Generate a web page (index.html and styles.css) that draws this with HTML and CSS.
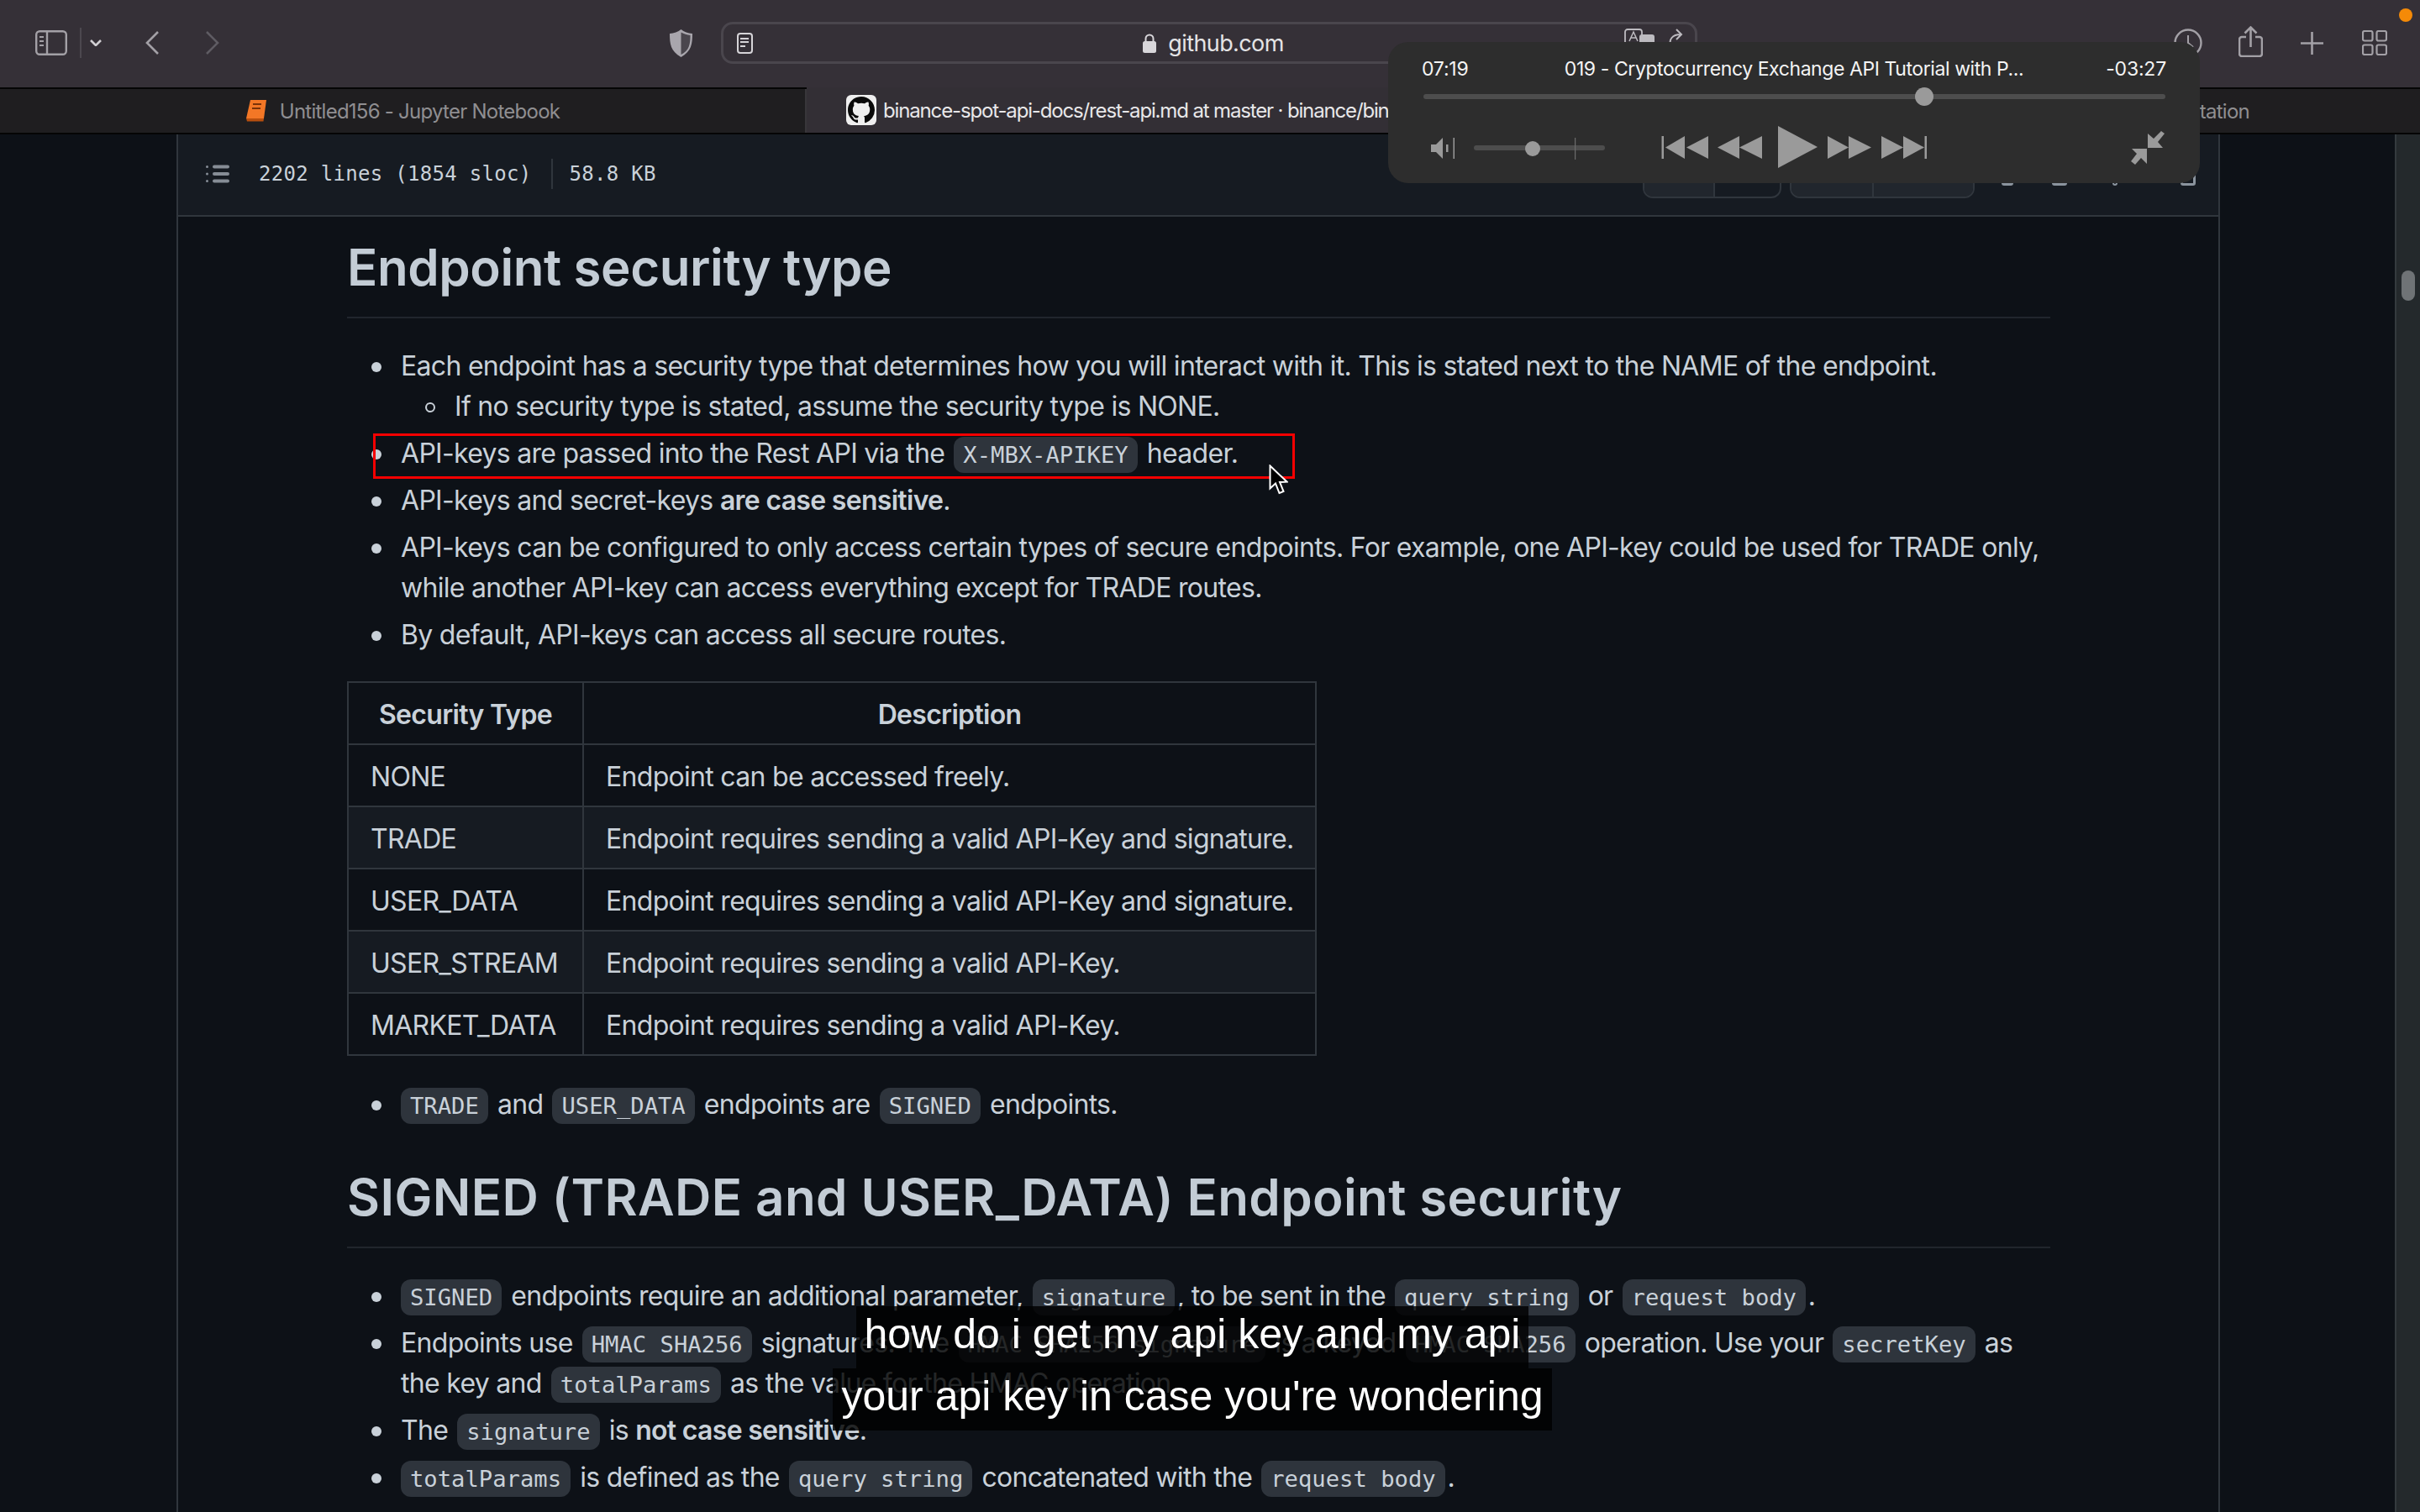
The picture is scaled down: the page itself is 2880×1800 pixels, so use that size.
FILE: index.html
```html
<!DOCTYPE html>
<html lang="en">
<head>
<meta charset="utf-8">
<title>binance-spot-api-docs/rest-api.md</title>
<link rel="stylesheet" href="styles.css">
</head>
<body>
<div class="screen">
  <header class="toolbar">
    <svg class="ic-sidebar" width="38" height="30" viewBox="0 0 38 30" fill="none" stroke="#a3a0a6" stroke-width="2.4"><rect x="1.2" y="1.2" width="35.6" height="27.6" rx="4"/><path d="M14 1.2v27.6"/><path d="M5 8h5M5 13h5M5 18h5" stroke-width="2"/></svg>
    <span class="tb-divider"></span>
    <svg class="ic-chev" width="14" height="8" viewBox="0 0 14 8" fill="none" stroke="#d0ced2" stroke-width="2.6"><path d="M1 1l6 6 6-6"/></svg>
    <svg class="ic-back" width="16" height="28" viewBox="0 0 16 28" fill="none" stroke="#a3a0a6" stroke-width="2.6"><path d="M15 1L2 14l13 13"/></svg>
    <svg class="ic-fwd" width="16" height="28" viewBox="0 0 16 28" fill="none" stroke="#5f5c63" stroke-width="2.6"><path d="M1 1l13 13L1 27"/></svg>
    <svg class="ic-shield" width="27" height="33" viewBox="0 0 27 33"><path d="M13.5 0C10 3 5 4.500 0 5c0 12 1 21 13.500 28C26 26 27 17 27 5 22 4.500 17 3 13.500 0z" fill="#a9a6ad"/><path d="M13.500 3.500C17 5.500 20.500 6.500 24.500 7c0 10-1 18-11 23z" fill="#4a464d"/></svg>
    <div class="urlbar">
      <svg class="ic-reader" width="19" height="25" viewBox="0 0 19 25" fill="none" stroke="#d6d4d8" stroke-width="2"><rect x="1" y="1" width="17" height="23" rx="3"/><path d="M4 7h10M4 11h10M4 16h6"/></svg>
      <div class="url-host">
        <svg width="16" height="23" viewBox="0 0 16 23"><rect y="9" width="16" height="14" rx="2.500" fill="#d8d6da"/><path d="M3.500 10V6a4.500 4.500 0 019 0v4" fill="none" stroke="#d8d6da" stroke-width="2"/></svg>
        <span class="host-text">github.com</span>
      </div>
      <div class="url-tools">
        <svg width="36" height="22" viewBox="0 0 36 22" fill="none"><rect x="1" y="1" width="20" height="19" rx="3" stroke="#bdbbc0" stroke-width="1.800"/><path d="M6 15l5-11 5 11M8 11h6" stroke="#bdbbc0" stroke-width="1.500"/><rect x="18" y="7" width="18" height="15" rx="3" fill="#bdbbc0"/></svg>
        <svg width="21" height="22" viewBox="0 0 21 22" fill="none" stroke="#bdbbc0" stroke-width="2"><path d="M4 21c-2-8 2-14 12-14M11 1l6 6-6 6"/></svg>
      </div>
    </div>
    <svg class="ic-clock" width="34" height="34" viewBox="0 0 34 34" fill="none" stroke="#a3a0a6" stroke-width="2.400"><circle cx="17" cy="17" r="15.500"/><path d="M17 8v9l6 5" stroke-width="2"/></svg>
    <svg class="ic-share" width="29" height="37" viewBox="0 0 29 37" fill="none" stroke="#a3a0a6" stroke-width="2.600"><path d="M9 13H4a3 3 0 00-3 3v17a3 3 0 003 3h21a3 3 0 003-3V16a3 3 0 00-3-3h-5"/><path d="M14.500 25V2M7.500 8.500l7-7 7 7"/></svg>
    <svg class="ic-plus" width="27" height="27" viewBox="0 0 27 27" fill="none" stroke="#a3a0a6" stroke-width="2.600"><path d="M13.500 0v27M0 13.500h27"/></svg>
    <svg class="ic-grid" width="30" height="30" viewBox="0 0 30 30" fill="none" stroke="#a3a0a6" stroke-width="2.200"><rect x="1" y="1" width="11.500" height="11.500" rx="2"/><rect x="17.500" y="1" width="11.500" height="11.500" rx="2"/><rect x="1" y="17.500" width="11.500" height="11.500" rx="2"/><rect x="17.500" y="17.500" width="11.500" height="11.500" rx="2"/></svg>
  </header>

  <nav class="tabs">
    <div class="tab tab-first">
      <svg width="26" height="26" viewBox="0 0 26 26"><path d="M6 0h19l-3 22H1z" fill="#f37726"/><path d="M1 22h21l-.5 3.500H2z" fill="#b84f0e"/><path d="M9 5h10M8 10h10" stroke="#7a3208" stroke-width="2.200"/></svg>
      <span>Untitled156 - Jupyter Notebook</span>
    </div>
    <div class="tab tab-active">
      <svg width="36" height="36" viewBox="0 0 36 36"><rect width="36" height="36" rx="6" fill="#efefef"/><g transform="translate(2 2)"><path fill="#0a0a0a" d="M16 0C7.160 0 0 7.160 0 16c0 7.080 4.580 13.060 10.940 15.180.8.140 1.100-.34 1.100-.76 0-.38-.02-1.640-.02-2.980-4.020.74-5.060-.98-5.380-1.880-.18-.46-.96-1.880-1.640-2.260-.56-.3-1.360-1.040-.02-1.060 1.260-.02 2.160 1.160 2.460 1.640 1.440 2.420 3.740 1.740 4.660 1.320.14-1.040.56-1.740 1.020-2.140-3.560-.4-7.280-1.780-7.280-7.900 0-1.740.62-3.180 1.640-4.300-.16-.4-.72-2.040.16-4.240 0 0 1.340-.42 4.400 1.640 1.280-.36 2.640-.54 4-.54s2.720.18 4 .54c3.060-2.080 4.400-1.640 4.400-1.640.88 2.200.32 3.840.16 4.240 1.020 1.120 1.640 2.540 1.640 4.300 0 6.140-3.740 7.500-7.300 7.900.58.5 1.080 1.460 1.080 2.960 0 2.140-.02 3.860-.02 4.400 0 .42.3.92 1.100.76A16.030 16.030 0 0032 16C32 7.160 24.840 0 16 0z"/></g></svg>
      <span>binance-spot-api-docs/rest-api.md at master · binance/binance-spot-api-docs · GitHub</span>
    </div>
    <div class="tab tab-last"><span>Binance Spot API Documentation</span></div>
  </nav>

  <main class="viewport">
    <div class="page">
      <section class="box">
        <div class="box-head">
          <svg class="ic-toc" width="28" height="24" viewBox="0 0 28 24" fill="#868d96"><rect y="2" width="3" height="3" rx="1.500"/><rect y="10.500" width="3" height="3" rx="1.500"/><rect y="19" width="3" height="3" rx="1.500"/><rect x="8" y="1.500" width="20" height="4" rx="2"/><rect x="8" y="10" width="20" height="4" rx="2"/><rect x="8" y="18.500" width="20" height="4" rx="2"/></svg>
          <span class="file-meta">2202 lines (1854 sloc)</span>
          <span class="meta-size">58.8 KB</span>
          <div class="btn-group group-a"><span class="btn btn-raised btn-a1"></span><span class="btn btn-a2"></span></div>
          <div class="btn-group group-b"><span class="btn btn-raised btn-b1"></span><span class="btn btn-raised btn-b2"></span></div>
          <span class="mini mini-a"></span><span class="mini mini-b"></span><span class="mini mini-c"></span><span class="mini mini-d"></span>
        </div>
        <article class="doc">
          <h2 class="h2-first">Endpoint security type</h2>
          <ul>
            <li>Each endpoint has a security type that determines how you will interact with it. This is stated next to the NAME of the endpoint.
              <ul class="sub"><li>If no security type is stated, assume the security type is NONE.</li></ul>
            </li>
            <li>API-keys are passed into the Rest API via the <code>X-MBX-APIKEY</code> header.</li>
            <li>API-keys and secret-keys <strong>are case sensitive</strong>.</li>
            <li>API-keys can be configured to only access certain types of secure endpoints. For example, one API-key could be used for TRADE only,<br>while another API-key can access everything except for TRADE routes.</li>
            <li>By default, API-keys can access all secure routes.</li>
          </ul>
          <table>
            <thead><tr><th class="col-type">Security Type</th><th class="col-desc">Description</th></tr></thead>
            <tbody>
              <tr><td>NONE</td><td>Endpoint can be accessed freely.</td></tr>
              <tr><td>TRADE</td><td>Endpoint requires sending a valid API-Key and signature.</td></tr>
              <tr><td>USER_DATA</td><td>Endpoint requires sending a valid API-Key and signature.</td></tr>
              <tr><td>USER_STREAM</td><td>Endpoint requires sending a valid API-Key.</td></tr>
              <tr><td>MARKET_DATA</td><td>Endpoint requires sending a valid API-Key.</td></tr>
            </tbody>
          </table>
          <ul class="after-table">
            <li><code class="lead">TRADE</code> and <code>USER_DATA</code> endpoints are <code>SIGNED</code> endpoints.</li>
          </ul>
          <h2 class="h2-second">SIGNED (TRADE and USER_DATA) Endpoint security</h2>
          <ul>
            <li><code class="lead">SIGNED</code> endpoints require an additional parameter, <code>signature</code>, to be sent in the <code>query string</code> or <code>request body</code>.</li>
            <li>Endpoints use <code>HMAC SHA256</code> signatures. The <code>HMAC SHA256 signature</code> is a keyed <code>HMAC SHA256</code> operation. Use your <code>secretKey</code> as<br>the key and <code>totalParams</code> as the value for the HMAC operation.</li>
            <li>The <code>signature</code> is <strong>not case sensitive</strong>.</li>
            <li><code class="lead">totalParams</code> is defined as the <code>query string</code> concatenated with the <code>request body</code>.</li>
          </ul>
        </article>
      </section>
    </div>
    <div class="scroll-track"><span class="scroll-thumb"></span></div>
  </main>

  <span class="rec-dot"></span>
  <span class="red-box"></span>
  <svg class="cursor" width="23" height="36" viewBox="0 0 23 36"><path d="M1.500 1.500v27l6.500-6 4.500 11.500 5-2-4.500-11 8.500-.5z" fill="#000" stroke="#fff" stroke-width="2"/></svg>

  <div class="captions">
    <span class="caption">how do i get my api key and my api</span>
    <span class="caption">your api key in case you're wondering</span>
  </div>

  <aside class="player">
    <div class="player-top">
      <span>07:19</span>
      <span class="player-title">019 - Cryptocurrency Exchange API Tutorial with P...</span>
      <span class="player-remain">-03:27</span>
    </div>
    <div class="seek"><span class="seek-thumb"></span></div>
    <svg class="player-ctrl" width="886" height="50" viewBox="1692 150 886 50">
      <g fill="#9a9a9a">
        <path d="M1703 172h6l8-8v25l-8-8h-6z"/>
        <rect x="1721" y="172" width="2.500" height="9"/>
        <rect x="1729.500" y="164" width="1.500" height="25"/>
        <rect x="1754" y="173" width="156" height="6" rx="3" fill="#4d4d4d"/>
        <rect x="1874" y="164" width="1.200" height="26" fill="#6c6c6c"/>
        <rect x="1815" y="168" width="18" height="18" rx="9"/>
        <rect x="1977.500" y="162" width="2.500" height="27"/>
        <path d="M2005 162v27l-23-13.500zM2033 162v27l-26-13.500z"/>
        <path d="M2070 162v27l-26-13.500zM2097 162v27l-27-13.500z"/>
        <path d="M2116 150v50l47-25z"/>
        <path d="M2175 162v27l25-13.500zM2200 162v27l27-13.500z"/>
        <path d="M2239 162v27l26-13.500zM2265 162v27l25-13.500z"/>
        <rect x="2290.500" y="162" width="2.500" height="27"/>
        <path d="M2576 159l-4-3-9 9-7-6v17h18l-6-7zM2555 177v18l-7-7-7 8-5-4 7-9-6-6z"/>
      </g>
    </svg>
  </aside>
</div>
</body>
</html>
```
FILE: styles.css
```css
* { box-sizing: border-box; }
html, body { margin: 0; padding: 0; background: #0d1117; }
body { font-family: Inter, "Liberation Sans", sans-serif; }
svg { flex: none; }
.screen { position: relative; width: 2880px; height: 1800px; overflow: hidden; display: flex; flex-direction: column; }

/* Safari toolbar */
.toolbar { height: 104px; flex: none; display: flex; align-items: center; padding: 0 0 2px 42px; background: #353037; }
.toolbar > * { flex: none; }
.tb-divider { width: 2px; height: 36px; background: #4c484f; margin-left: 15px; }
.ic-chev { margin-left: 10px; }
.ic-back { margin-left: 52px; }
.ic-fwd { margin-left: 56px; }
.ic-shield { margin-left: 536px; }
.urlbar { margin-left: 34px; width: 1162px; height: 50px; border: 3px solid #4a464d; border-radius: 14px; display: grid; grid-template-columns: 1fr auto 1fr; align-items: center; padding: 0 12px 0 16px; }
.url-host { display: flex; align-items: center; gap: 14px; margin-left: 6px; }
.host-text { font-size: 27px; letter-spacing: -0.6px; color: #e4e3e5; }
.url-tools { display: flex; justify-content: flex-end; align-items: flex-start; gap: 15px; align-self: start; margin-top: 5px; }
.ic-clock { margin-left: 567px; }
.ic-share { margin-left: 43px; margin-top: -3px; }
.ic-plus { margin-left: 45px; }
.ic-grid { margin-left: 46px; }
.rec-dot { position: absolute; left: 2855px; top: 10px; width: 16px; height: 16px; border-radius: 50%; background: #f58a07; }

/* Tabs */
.tabs { height: 56px; flex: none; display: flex; border-top: 2px solid #050505; border-bottom: 2px solid #050505; font-size: 24px; letter-spacing: -0.75px; }
.tab { width: 960px; flex: none; display: flex; align-items: center; overflow: hidden; white-space: nowrap; background: #1f1e20; color: #8f8e91; }
.tab-first { justify-content: center; gap: 15px; border-right: 2px solid #38363a; }
.tab-active { background: #332f35; color: #e8e7e9; padding-left: 47px; gap: 8px; margin-top: -2px; height: 54px; letter-spacing: -1.15px; }
.tab-last { justify-content: flex-end; padding-right: 203px; }

/* Viewport */
.viewport { flex: 1; display: flex; min-height: 0; }
.page { flex: 1; min-width: 0; padding-left: 210px; overflow: hidden; background: #0d1117; }
.box { width: 2432px; height: 100%; border-left: 2px solid #30363d; border-right: 2px solid #30363d; }
.box-head { height: 98px; border-bottom: 2px solid #30363d; background: #161b22; display: flex; align-items: center; padding: 0 0 2px 33px; color: #c9d1d9; font-family: "DejaVu Sans Mono", monospace; font-size: 24px; letter-spacing: .3px; }
.file-meta { margin-left: 35px; padding-right: 24px; border-right: 2px solid #30363d; line-height: 36px; }
.meta-size { margin-left: 19px; }
.btn-group { display: flex; height: 56px; border: 2px solid #30363d; border-radius: 12px; overflow: hidden; margin-top: 2px; }
.group-a { margin-left: 1174px; width: 165px; }
.group-b { margin-left: 10px; width: 220px; }
.btn { display: block; height: 100%; }
.btn-raised { background: #21262d; border-right: 2px solid #30363d; }
.btn-a1 { width: 84px; }
.btn-a2 { flex: 1; }
.btn-b1 { width: 98px; }
.btn-b2 { flex: 1; border-right: 0; }
.mini { display: block; width: 14px; height: 28px; border: 3px solid #8b949e; border-radius: 3px; flex: none; }
.mini-a { margin-left: 32px; }
.mini-b { margin-left: 46px; width: 18px; }
.mini-c { margin-left: 54px; width: 6px; border-width: 2px; }
.mini-d { margin-left: 75px; width: 18px; }

/* Article */
.doc { padding: 30px 200px 0 201px; color: #c9d1d9; font-size: 32px; line-height: 48px; letter-spacing: -0.7px; }
h2 { margin: 0 0 33px; height: 91px; padding-bottom: 29px; border-bottom: 2px solid #21262d; font-size: 60px; line-height: 60px; font-weight: 600; color: #c3ccd5; white-space: nowrap; }
.h2-first { letter-spacing: -0.4px; }
.h2-second { margin-top: 56px; margin-bottom: 33px; letter-spacing: 0.4px; }
ul { margin: 0; padding: 0 0 0 64px; list-style: none; }
li + li { margin-top: 8px; }
li::before { content: ""; display: inline-block; box-sizing: border-box; width: 12px; height: 12px; margin-left: -35px; margin-right: 23px; vertical-align: 4.5px; border-radius: 50%; background: #c9d1d9; }
.sub li::before { background: transparent; border: 2px solid #c9d1d9; }
strong { font-weight: 600; }
code { font-family: "DejaVu Sans Mono", monospace; font-size: 27.2px; letter-spacing: 0; line-height: 1; padding: 6px 11px; margin: 0 2.8px; border-radius: 12px; background: #2e343c; }
code.lead { margin-left: 0; }
table { border-collapse: collapse; width: 1154px; margin: 31px 0 34px; table-layout: fixed; }
th, td { border: 2px solid #30363d; padding: 14px 26px 10px; height: 74px; text-align: left; white-space: nowrap; }
th { text-align: center; font-weight: 600; }
.col-type { width: 280px; }
tbody tr:nth-child(even) { background: #161b22; }

/* Scrollbar */
.scroll-track { width: 30px; flex: none; background: #24292c; border-left: 2px solid #343a3e; padding: 162px 0 0 6px; }
.scroll-thumb { display: block; width: 16px; height: 36px; border-radius: 8px; background: #6f7376; }

/* Overlays */
.red-box { position: absolute; left: 444px; top: 516px; width: 1097px; height: 54px; border: 3px solid #f50000; }
.cursor { position: absolute; left: 1510px; top: 553px; }
.captions { position: absolute; left: 0; top: 1555px; width: 2838px; display: flex; flex-direction: column; align-items: center; font-family: "Liberation Sans", Arial, sans-serif; font-size: 50px; line-height: 66px; color: #fff; }
.caption { display: block; padding: 0 10px 8px; background: rgba(0, 0, 0, .82); white-space: nowrap; }

/* Floating player */
.player { position: absolute; left: 1652px; top: 50px; width: 966px; height: 168px; padding: 18px 40px 0; border-radius: 24px; background: #2d2d2d; color: #f4f4f4; font-size: 23px; }
.player-top { display: grid; grid-template-columns: 1fr auto 1fr; align-items: center; height: 26px; letter-spacing: -0.2px; white-space: nowrap; }
.player-title { letter-spacing: -0.42px; }
.player-remain { text-align: right; }
.seek { position: relative; height: 6px; margin: 18px 1px 0 2px; border-radius: 3px; background: #4d4d4d; }
.seek-thumb { position: absolute; left: 585px; top: -8px; width: 22px; height: 22px; border-radius: 50%; background: #9a9a9a; }
.player-ctrl { display: block; margin-top: 32px; }
```
